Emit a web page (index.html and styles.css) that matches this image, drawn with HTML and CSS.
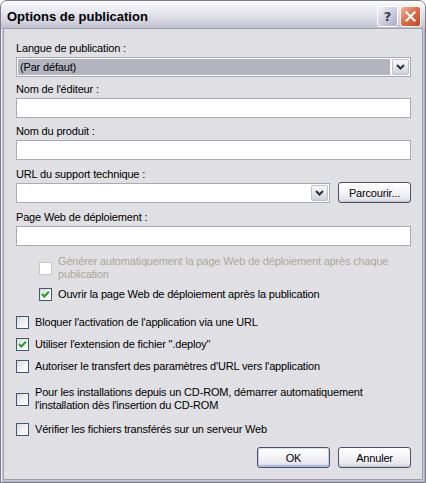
FILE: index.html
```html
<!DOCTYPE html>
<html lang="fr">
<head>
<meta charset="utf-8">
<title>Options de publication</title>
<link rel="stylesheet" href="styles.css">
</head>
<body>
<div class="window">
  <div class="titlebar">
    <span class="title">Options de publication</span>
    <div class="tb-buttons">
      <span class="tb-btn help">?</span>
      <span class="tb-btn close">
        <svg width="11" height="11" viewBox="0 0 11 11"><path d="M1.5 1.5 L9.5 9.5 M9.5 1.5 L1.5 9.5" stroke="#fff" stroke-width="2.2" stroke-linecap="square" fill="none"/></svg>
      </span>
    </div>
  </div>
  <div class="client">
    <div class="group g1">
      <div class="label">Langue de publication :</div>
      <div class="field combo">
        <span class="val selected">(Par défaut)</span>
        <span class="drop"><svg width="9" height="6" viewBox="0 0 9 6"><polyline points="1,1 4.5,4.5 8,1" stroke="#2f2f3a" stroke-width="2" fill="none"/></svg></span>
      </div>
    </div>
    <div class="group g2">
      <div class="label">Nom de l'éditeur :</div>
      <div class="field"></div>
    </div>
    <div class="group g3">
      <div class="label">Nom du produit :</div>
      <div class="field"></div>
    </div>
    <div class="group g4">
      <div class="label">URL du support technique :</div>
      <div class="combo-row">
        <div class="field combo url">
          <span class="val"></span>
          <span class="drop"><svg width="9" height="6" viewBox="0 0 9 6"><polyline points="1,1 4.5,4.5 8,1" stroke="#2f2f3a" stroke-width="2" fill="none"/></svg></span>
        </div>
        <span class="btn">Parcourir...</span>
      </div>
    </div>
    <div class="group g5">
      <div class="label">Page Web de déploiement :</div>
      <div class="field"></div>
    </div>

    <div class="check-row indent disabled r1">
      <span class="cb"></span>
      <span class="cb-text">Générer automatiquement la page Web de déploiement après chaque<br>publication</span>
    </div>
    <div class="check-row indent r2">
      <span class="cb checked"><svg width="11" height="11" viewBox="0 0 11 11"><polyline points="2,5 4.3,7.5 8.8,2.8" stroke="#21a121" stroke-width="2" fill="none"/></svg></span>
      <span class="cb-text">Ouvrir la page Web de déploiement après la publication</span>
    </div>
    <div class="check-row r3">
      <span class="cb"></span>
      <span class="cb-text">Bloquer l'activation de l'application via une URL</span>
    </div>
    <div class="check-row r4">
      <span class="cb checked"><svg width="11" height="11" viewBox="0 0 11 11"><polyline points="2,5 4.3,7.5 8.8,2.8" stroke="#21a121" stroke-width="2" fill="none"/></svg></span>
      <span class="cb-text">Utiliser l'extension de fichier ".deploy"</span>
    </div>
    <div class="check-row r5">
      <span class="cb"></span>
      <span class="cb-text">Autoriser le transfert des paramètres d'URL vers l'application</span>
    </div>
    <div class="check-row r6">
      <span class="cb"></span>
      <span class="cb-text">Pour les installations depuis un CD-ROM, démarrer automatiquement<br>l'installation dès l'insertion du CD-ROM</span>
    </div>
    <div class="check-row r7">
      <span class="cb"></span>
      <span class="cb-text">Vérifier les fichiers transférés sur un serveur Web</span>
    </div>

    <div class="buttons">
      <span class="btn default">OK</span>
      <span class="btn">Annuler</span>
    </div>
  </div>
</div>
</body>
</html>
```
FILE: styles.css
```css
* { box-sizing: border-box; }
html, body { margin: 0; padding: 0; }
body {
  width: 426px;
  height: 483px;
  overflow: hidden;
  background: #ffffff;
  font-family: "Liberation Sans", Arial, sans-serif;
  font-size: 11px;
  color: #000;
}
.window {
  width: 426px;
  height: 483px;
  display: flex;
  flex-direction: column;
  background: #c9c9d6;
  border: 1px solid #7c7c8c;
  border-radius: 7px 7px 0 0;
  overflow: hidden;
  box-shadow: inset 1px 0 0 #eeeef4, inset -1px 0 0 #b0b0c0, inset 0 -1px 0 #b0b0c0;
}
.titlebar {
  height: 28px;
  flex: none;
  display: flex;
  align-items: center;
  padding: 0 4px 0 6px;
  background: linear-gradient(to bottom, #ffffff 0%, #f4f4f8 12%, #e6e6ee 40%, #d2d2de 75%, #bdbdcc 100%);
}
.title {
  flex: 1;
  font-weight: bold;
  font-size: 13px;
  padding-top: 3px;
  color: #000;
}
.tb-buttons {
  display: flex;
  gap: 2px;
  padding-top: 2px;
}
.tb-btn {
  width: 21px;
  height: 21px;
  border: 1px solid #ffffff;
  border-radius: 3px;
  display: flex;
  align-items: center;
  justify-content: center;
}
.help {
  background: linear-gradient(135deg, #f2f2fa 0%, #cfd0e0 50%, #a9abc4 100%);
  color: #3c3c50;
  font-family: "DejaVu Sans", sans-serif;
  font-weight: bold;
  font-size: 13px;
}
.close {
  background: linear-gradient(135deg, #f6b39a 0%, #e0704d 45%, #c8401c 100%);
}
.client {
  flex: 1;
  margin: 0 3px 3px;
  background: #e0dfe3;
  box-shadow: 0 0 0 1px #9d9dad;
  padding: 13px 11px 0 12px;
  display: flex;
  flex-direction: column;
  letter-spacing: -0.17px;
}
.label {
  line-height: 13px;
  height: 13px;
  margin-bottom: 2px;
  white-space: nowrap;
}
.g2 { margin-top: 6px; }
.g3 { margin-top: 7px; }
.g4 { margin-top: 8px; }
.g5 { margin-top: 8px; }
.field {
  height: 20px;
  border: 1px solid #a5acb5;
  background: #ffffff;
  display: flex;
}
.combo { padding: 1px; }
.val {
  flex: 1;
  line-height: 16px;
  padding-left: 2px;
  white-space: nowrap;
}
.val.selected { background: #b2b4bf; margin-right: 2px; }
.drop {
  width: 17px;
  height: 16px;
  flex: none;
  border: 1px solid #bcc0cf;
  border-radius: 2px;
  background: linear-gradient(to bottom, #f7f7fa 0%, #e6e6ee 50%, #cfd0dc 100%);
  display: flex;
  align-items: center;
  justify-content: center;
}
.combo-row {
  display: flex;
  gap: 8px;
}
.url { width: 314px; }
.btn {
  width: 73px;
  height: 21px;
  flex: none;
  border: 1px solid #4b5068;
  border-radius: 3px;
  background: linear-gradient(to bottom, #ffffff 0%, #f6f6f9 40%, #e8e8ee 80%, #d0d2dc 100%);
  display: flex;
  align-items: center;
  justify-content: center;
  white-space: nowrap;
  box-shadow: inset 0 -1px 0 #c4c8d8;
}
.combo-row .btn { height: 21px; margin-top: -1px; }
.btn.default {
  box-shadow: inset 0 1px 0 #d6e4f8, inset 1px 0 0 #bcd0ee, inset -1px 0 0 #bcd0ee, inset 0 -2px 0 #a8bfe6;
}
.check-row {
  display: flex;
  align-items: center;
  gap: 6px;
  line-height: 13px;
}
.check-row.indent { margin-left: 23px; }
.cb {
  width: 13px;
  height: 13px;
  flex: none;
  border: 1px solid #3f5877;
  background: linear-gradient(135deg, #dcdcd6 0%, #f2f2ef 55%, #ffffff 100%);
  display: flex;
  align-items: center;
  justify-content: center;
}
.cb-text { white-space: nowrap; }
.disabled .cb {
  border-color: #cac8bb;
  background: #ffffff;
}
.disabled .cb-text { color: #aca899; }
.r1 { margin-top: 9px; }
.r2 { margin-top: 7px; }
.r3 { margin-top: 15px; }
.r4 { margin-top: 9px; }
.r5 { margin-top: 9px; }
.r6 { margin-top: 13px; }
.r7 { margin-top: 11px; }
.buttons {
  margin-top: 11px;
  display: flex;
  justify-content: flex-end;
  gap: 8px;
}
```
